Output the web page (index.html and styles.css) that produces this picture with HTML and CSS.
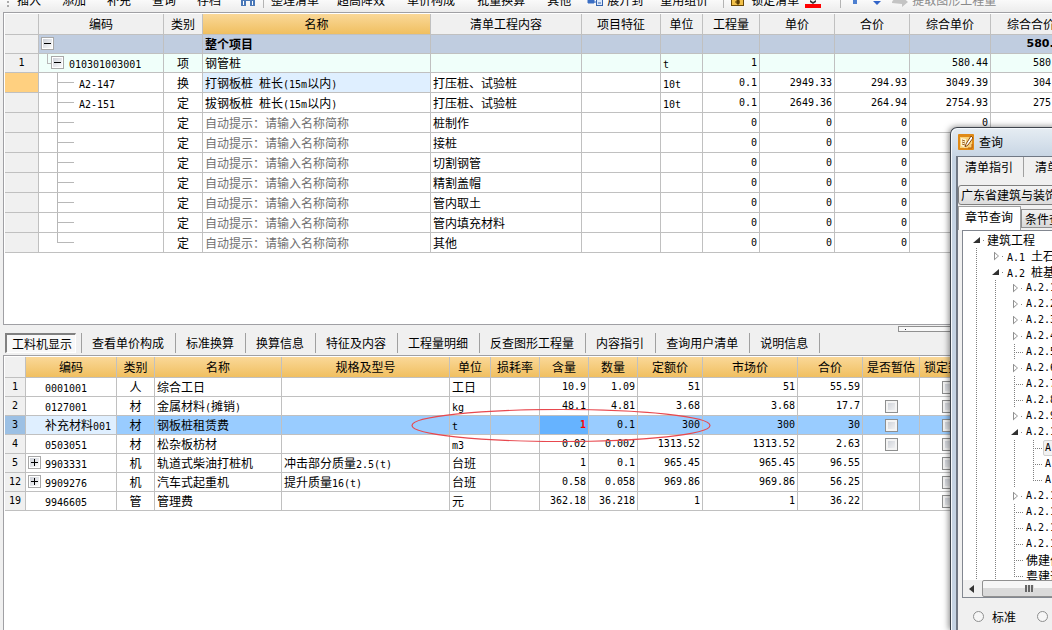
FILE: index.html
```
<!DOCTYPE html>
<html lang="zh-CN">
<head>
<meta charset="utf-8">
<title>工程计价</title>
<link rel="stylesheet" href="styles.css">
</head>
<body>
<div class="app">
  <div class="toolbar">
    <div class="tools">
      <span class="grip"></span>
      <div class="group"><button>插入</button><button>添加</button><button>补充</button><button>查询</button><button>存档</button></div>
      <button class="icon-btn find" aria-label="查找"><svg width="16" height="16" viewBox="0 0 16 16"><path d="M1 3h5v11H1zM10 3h5v11h-5zM6 6h4v3H6z" fill="#4a78b8"/><path d="M3 9h1v4H3zM12 9h1v4h-1z" fill="#fff"/></svg></button>
      <span class="sep"></span>
      <div class="group wide"><button class="tight">整理清单</button><button>超高降效</button><button>单价构成</button><button>批量换算</button><button>其他</button></div>
      <button class="with-icon expand-to"><svg width="16" height="16" viewBox="0 0 16 16"><path d="M1 8h6v3H1zM7 10h3" fill="#3b6fc4" stroke="#3b6fc4"/><rect x="9.500" y="7.500" width="6" height="6" fill="#dbe8fa" stroke="#3563ad"/><path d="M11 11h3" stroke="#3563ad"/></svg>展开到</button>
      <button class="reuse">重用组价</button>
      <span class="sep"></span>
      <button class="with-icon lock"><svg width="13" height="16" viewBox="0 0 13 16"><rect x=".5" y="5.500" width="12" height="8" fill="#f2c14a" stroke="#6b4a08"/><path d="M6 8h2v4H6zM4 10h5" fill="#5a3c05" stroke="#5a3c05"/></svg>锁定清单</button>
      <button class="icon-btn paint" aria-label="颜色"><svg width="16" height="16" viewBox="0 0 16 16"><path d="M5 8l3 2 3-2v2l-3 2-3-2z" fill="#333"/><path d="M0 12h16v4H0z" fill="#f00"/></svg></button>
      <span class="sep color-sep"></span>
      <button class="icon-btn up" aria-label="上移"><svg width="8" height="16" viewBox="0 0 8 16"><path d="M2 7h4v5H2z" fill="#4d7fd0"/></svg></button>
      <button class="icon-btn down" aria-label="下移"><svg width="8" height="16" viewBox="0 0 8 16"><path d="M0 9h8l-4 4z" fill="#3264c8"/></svg></button>
      <button class="with-icon extract" disabled><svg width="16" height="16" viewBox="0 0 16 16"><path d="M0 11c0-5 9-5 9-5V4l7 6-6 5v-3z" fill="#c4c4c4"/></svg>提取图形工程量</button>
    </div>
  </div>

  <section class="panel bill-panel">
    <table class="grid bill">
      <colgroup><col class="c34"><col class="c125"><col class="c39"><col class="c228"><col class="c151"><col class="c79"><col class="c42"><col class="c57"><col class="c75"><col class="c75"><col class="c81"><col class="c81"></colgroup>
      <thead><tr><th></th><th>编码</th><th>类别</th><th class="gold">名称</th><th>清单工程内容</th><th>项目特征</th><th>单位</th><th>工程量</th><th>单价</th><th>合价</th><th>综合单价</th><th>综合合价</th></tr></thead>
      <tbody>
        <tr class="total"><td class="no"></td><td class="root"><button class="toggle minus" aria-label="折叠"></button></td><td></td><td>整个项目</td><td></td><td></td><td></td><td></td><td></td><td></td><td></td><td class="r">580.44</td></tr>
        <tr class="item"><td class="no">1</td><td class="sub"><button class="toggle minus" aria-label="折叠"></button><i>010301003001</i></td><td class="c">项</td><td>钢管桩</td><td></td><td></td><td><i>t</i></td><td class="r">1</td><td></td><td></td><td class="r">580.44</td><td class="r">580.44</td></tr>
        <tr><td class="no current"></td><td class="branch"><i>A2-147</i></td><td class="c">换</td><td class="focus">打钢板桩<i> </i>桩长<i>(15m</i>以内<i>)</i></td><td>打压桩、试验桩</td><td></td><td><i>10t</i></td><td class="r">0.1</td><td class="r">2949.33</td><td class="r">294.93</td><td class="r">3049.39</td><td class="r">304.94</td></tr>
        <tr><td class="no"></td><td class="branch"><i>A2-151</i></td><td class="c">定</td><td>拔钢板桩<i> </i>桩长<i>(15m</i>以内<i>)</i></td><td>打压桩、试验桩</td><td></td><td><i>10t</i></td><td class="r">0.1</td><td class="r">2649.36</td><td class="r">264.94</td><td class="r">2754.93</td><td class="r">275.49</td></tr>
        <tr><td class="no"></td><td class="branch"></td><td class="c">定</td><td class="hint">自动提示：请输入名称简称</td><td>桩制作</td><td></td><td></td><td class="r">0</td><td class="r">0</td><td class="r">0</td><td class="r">0</td><td class="r">0</td></tr>
        <tr><td class="no"></td><td class="branch"></td><td class="c">定</td><td class="hint">自动提示：请输入名称简称</td><td>接桩</td><td></td><td></td><td class="r">0</td><td class="r">0</td><td class="r">0</td><td class="r"></td><td class="r"></td></tr>
        <tr><td class="no"></td><td class="branch"></td><td class="c">定</td><td class="hint">自动提示：请输入名称简称</td><td>切割钢管</td><td></td><td></td><td class="r">0</td><td class="r">0</td><td class="r">0</td><td class="r"></td><td class="r"></td></tr>
        <tr><td class="no"></td><td class="branch"></td><td class="c">定</td><td class="hint">自动提示：请输入名称简称</td><td>精割盖帽</td><td></td><td></td><td class="r">0</td><td class="r">0</td><td class="r">0</td><td class="r"></td><td class="r"></td></tr>
        <tr><td class="no"></td><td class="branch"></td><td class="c">定</td><td class="hint">自动提示：请输入名称简称</td><td>管内取土</td><td></td><td></td><td class="r">0</td><td class="r">0</td><td class="r">0</td><td class="r"></td><td class="r"></td></tr>
        <tr><td class="no"></td><td class="branch"></td><td class="c">定</td><td class="hint">自动提示：请输入名称简称</td><td>管内填充材料</td><td></td><td></td><td class="r">0</td><td class="r">0</td><td class="r">0</td><td class="r"></td><td class="r"></td></tr>
        <tr><td class="no"></td><td class="branch last"></td><td class="c">定</td><td class="hint">自动提示：请输入名称简称</td><td>其他</td><td></td><td></td><td class="r">0</td><td class="r">0</td><td class="r">0</td><td class="r"></td><td class="r"></td></tr>
      </tbody>
    </table>
  </section>

  <div class="detail-tabs">
    <button class="active">工料机显示</button><button>查看单价构成</button><button>标准换算</button><button>换算信息</button><button>特征及内容</button><button>工程量明细</button><button>反查图形工程量</button><button>内容指引</button><button>查询用户清单</button><button>说明信息</button>
    <span class="splitter"></span>
  </div>

  <section class="panel detail-panel">
    <table class="grid detail">
      <colgroup><col class="c21"><col class="c91"><col class="c38"><col class="c127"><col class="c168"><col class="c41"><col class="c49"><col class="c49"><col class="c49"><col class="c65"><col class="c95"><col class="c65"><col class="c57"><col class="c57"></colgroup>
      <thead><tr><th class="corner"></th><th>编码</th><th>类别</th><th>名称</th><th>规格及型号</th><th>单位</th><th>损耗率</th><th>含量</th><th>数量</th><th>定额价</th><th>市场价</th><th>合价</th><th>是否暂估</th><th>锁定数量</th></tr></thead>
      <tbody>
        <tr><td class="no">1</td><td class="code"><i>0001001</i></td><td class="c">人</td><td>综合工日</td><td></td><td>工日</td><td></td><td class="r">10.9</td><td class="r">1.09</td><td class="r">51</td><td class="r">51</td><td class="r">55.59</td><td></td><td class="c"><input type="checkbox" aria-label="锁定数量"></td></tr>
        <tr><td class="no">2</td><td class="code"><i>0127001</i></td><td class="c">材</td><td>金属材料<i>(</i>摊销<i>)</i></td><td></td><td><i>kg</i></td><td></td><td class="r">48.1</td><td class="r">4.81</td><td class="r">3.68</td><td class="r">3.68</td><td class="r">17.7</td><td class="c"><input type="checkbox" aria-label="是否暂估"></td><td class="c"><input type="checkbox" aria-label="锁定数量"></td></tr>
        <tr class="selected"><td class="no">3</td><td class="code focus">补充材料<i>001</i></td><td class="c">材</td><td>钢板桩租赁费</td><td></td><td><i>t</i></td><td></td><td class="r changed">1</td><td class="r">0.1</td><td class="r">300</td><td class="r">300</td><td class="r">30</td><td class="c"><input type="checkbox" aria-label="是否暂估"></td><td class="c"><input type="checkbox" aria-label="锁定数量"></td></tr>
        <tr><td class="no">4</td><td class="code"><i>0503051</i></td><td class="c">材</td><td>松杂板枋材</td><td></td><td><i>m3</i></td><td></td><td class="r">0.02</td><td class="r">0.002</td><td class="r">1313.52</td><td class="r">1313.52</td><td class="r">2.63</td><td class="c"><input type="checkbox" aria-label="是否暂估"></td><td class="c"><input type="checkbox" aria-label="锁定数量"></td></tr>
        <tr><td class="no">5</td><td class="parent"><button class="toggle plus" aria-label="展开"></button><i>9903331</i></td><td class="c">机</td><td>轨道式柴油打桩机</td><td>冲击部分质量<i>2.5(t)</i></td><td>台班</td><td></td><td class="r">1</td><td class="r">0.1</td><td class="r">965.45</td><td class="r">965.45</td><td class="r">96.55</td><td></td><td class="c"><input type="checkbox" aria-label="锁定数量"></td></tr>
        <tr><td class="no">12</td><td class="parent"><button class="toggle plus" aria-label="展开"></button><i>9909276</i></td><td class="c">机</td><td>汽车式起重机</td><td>提升质量<i>16(t)</i></td><td>台班</td><td></td><td class="r">0.58</td><td class="r">0.058</td><td class="r">969.86</td><td class="r">969.86</td><td class="r">56.25</td><td></td><td class="c"><input type="checkbox" aria-label="锁定数量"></td></tr>
        <tr><td class="no">19</td><td class="code"><i>9946605</i></td><td class="c">管</td><td>管理费</td><td></td><td>元</td><td></td><td class="r">362.18</td><td class="r">36.218</td><td class="r">1</td><td class="r">1</td><td class="r">36.22</td><td></td><td class="c"><input type="checkbox" aria-label="锁定数量"></td></tr>
      </tbody>
    </table>
    <svg class="marker" width="300" height="33" viewBox="0 0 300 33"><ellipse cx="150" cy="16.500" rx="149" ry="16" fill="none" stroke="#e8484e" stroke-width="1.200"/></svg>
  </section>

  <div class="dialog" role="dialog" aria-label="查询">
    <div class="title">
      <svg width="16" height="16" viewBox="0 0 16 16"><rect width="16" height="16" rx="1" fill="#e08a16"/><path d="M2 3h12v11H2z" fill="#f9d27a"/><path d="M3 4l5 1v9l-5-2z" fill="#fff3cf"/><path d="M4 6l3 1M4 8l3 1M4 10l3 1" stroke="#a0641c"/><path d="M13 2l-5 8-1 3 3-2 5-7z" fill="#fff" stroke="#8a4c10"/><path d="M10 14h4v-4" stroke="#b85c0a" fill="none"/></svg>
      <span>查询</span>
    </div>
    <div class="client">
      <div class="guide-tabs"><button>清单指引</button><button>清单</button></div>
      <button class="book">广东省建筑与装饰</button>
      <div class="query-tabs"><button class="on">章节查询</button><button>条件查询</button></div>
      <div class="tree-box">
        <ul class="tree">
          <li><b class="t open first"></b><span>建筑工程</span></li>
          <li><b class="g"></b><b class="t shut"></b><span>A.1 <em>土石方</em></span></li>
          <li><b class="g"></b><b class="t open"></b><span>A.2 <em>桩基</em></span></li>
          <li><b class="g"></b><b class="g"></b><b class="t shut"></b><span>A.2.1</span></li>
          <li><b class="g"></b><b class="g"></b><b class="t shut"></b><span>A.2.2</span></li>
          <li><b class="g"></b><b class="g"></b><b class="t shut"></b><span>A.2.3</span></li>
          <li><b class="g"></b><b class="g"></b><b class="t shut"></b><span>A.2.4</span></li>
          <li><b class="g"></b><b class="g"></b><b class="t leaf"></b><span>A.2.5</span></li>
          <li><b class="g"></b><b class="g"></b><b class="t shut"></b><span>A.2.6</span></li>
          <li><b class="g"></b><b class="g"></b><b class="t leaf"></b><span>A.2.7</span></li>
          <li><b class="g"></b><b class="g"></b><b class="t leaf"></b><span>A.2.8</span></li>
          <li><b class="g"></b><b class="g"></b><b class="t shut"></b><span>A.2.9</span></li>
          <li><b class="g"></b><b class="g"></b><b class="t open"></b><span>A.2.10</span></li>
          <li><b class="g"></b><b class="g"></b><b class="g"></b><b class="t leaf"></b><span class="picked">A.2</span></li>
          <li><b class="g"></b><b class="g"></b><b class="g"></b><b class="t leaf"></b><span>A.2</span></li>
          <li><b class="g"></b><b class="g"></b><b class="g"></b><b class="t leaf end"></b><span>A.2</span></li>
          <li><b class="g"></b><b class="g"></b><b class="t shut"></b><span>A.2.11</span></li>
          <li><b class="g"></b><b class="g"></b><b class="t leaf"></b><span>A.2.12</span></li>
          <li><b class="g"></b><b class="g"></b><b class="t leaf"></b><span>A.2.13</span></li>
          <li><b class="g"></b><b class="g"></b><b class="t leaf"></b><span>A.2.14</span></li>
          <li><b class="g"></b><b class="g"></b><b class="t leaf"></b><span><em>佛建价</em></span></li>
          <li><b class="g"></b><b class="g"></b><b class="t leaf end"></b><span><em>粤建造</em></span></li>
        </ul>
        <div class="scroll"><button class="arrow" aria-label="向左"><svg width="5" height="8" viewBox="0 0 5 8"><path d="M5 0v8L0 4z" fill="#333"/></svg></button><div class="thumb"><svg width="9" height="7" viewBox="0 0 9 7"><path d="M1 0v7M4 0v7M7 0v7" stroke="#666" stroke-width="2" stroke-dasharray="7"/><path d="M2.500 0v7M5.500 0v7M8.500 0v7" stroke="#ddd"/></svg></div></div>
      </div>
      <div class="kinds"><label><input type="radio" name="kind">标准</label><label><input type="radio" name="kind">补充</label></div>
    </div>
  </div>
</div>
</body>
</html>
```

FILE: styles.css
```
* { box-sizing: border-box; }
body {
  margin: 0;
  font: 12px/16px "Noto Sans CJK SC", sans-serif;
  color: #000;
  background: #f0f0f0;
}
button {
  font: inherit;
  color: inherit;
  padding: 0;
  border: 0;
  background: none;
  white-space: nowrap;
  flex: none;
}
svg { display: block; flex: none; }

.app {
  position: relative;
  display: flex;
  flex-direction: column;
  height: 100vh;
  overflow: hidden;
}

/* toolbar */
.toolbar {
  display: flex;
  align-items: flex-end;
  flex: none;
  height: 12px;
  padding-bottom: 4px;
  background: linear-gradient(#fafafa, #ececec);
}
.tools { display: flex; align-items: center; }
.group { display: flex; gap: 21px; }
.group.wide { gap: 22px; }
.group .tight { margin-right: -4px; }
.grip { width: 3px; height: 14px; margin: 0 7px; border-left: 2px dotted #aaa; }
.sep { width: 1px; height: 16px; margin: 0 7px; background: #b4b4b4; }
.find { margin-left: 19px; }
.with-icon { display: flex; align-items: center; gap: 4px; }
.expand-to { margin-left: 16px; }
.reuse { margin: 0 8px 0 17px; }
.lock { gap: 7px; }
.paint { margin-left: 6px; }
.color-sep { margin: 0 10px 0 19px; }
.down { margin-left: 14px; }
.extract { margin-left: 11px; color: #8a8a8a; }

/* grids */
.panel {
  position: relative;
  min-height: 0;
  overflow: hidden;
  margin-left: 3px;
  padding: 1px 0 0 1px;
  border: solid #a0a0a4;
  border-width: 1px 0 0 1px;
  background: #fff;
}
.bill-panel { flex: 313 1 0; border-bottom-width: 1px; }
.detail-panel { flex: 275 1 0; }
.grid { table-layout: fixed; border-collapse: separate; border-spacing: 0; }
.bill { width: 1067px; }
.detail { width: 972px; }
.grid th, .grid td {
  padding: 0 2px;
  border: solid #c0c0c0;
  border-width: 0 1px 1px 0;
  overflow: hidden;
  white-space: nowrap;
  text-align: left;
  font-weight: 400;
}
.grid th { height: 21px; padding: 0; text-align: center; background: #f0f0f0; }
.grid th.gold, .detail th { background: linear-gradient(#fad898, #f0bf60); }
.grid th.corner { background: #f0f0f0; }
.grid td { height: 20px; line-height: 16px; }
.grid .total td, .grid .item td, .detail td { height: 19px; }
.grid i, .grid td.r, .grid td.no {
  font: 10px/16px "DejaVu Sans Mono", monospace;
  white-space: pre;
}
.grid i { line-height: 10px; }
.grid td.r { text-align: right; }
.grid td.c { text-align: center; }
.grid td.no { background: #f0f0f0; text-align: center; }
.grid td.current { background: #ffd080; }
.grid .total td { background: #c0cde0; font-weight: 700; }
.grid .total td.r { font: 700 11px/16px "DejaVu Sans", sans-serif; }
.grid .item td { background-color: #f0fffa; }
.grid .total .no, .grid .item .no { background: #f0f0f0; }
.grid .hint { color: #707070; }
.grid td.focus { background: #dfefff; }
.detail .selected td { background: #99ccff; }
.detail .selected .no { background: #9cc0e4; }
.detail .selected .focus { background: #dfefff; }
.detail .selected .changed { background: #66b3ff; color: #f00; font-weight: 700; }
.detail td.code { padding-left: 19px; }

.c21 { width: 21px; } .c34 { width: 34px; } .c38 { width: 38px; } .c39 { width: 39px; }
.c41 { width: 41px; } .c42 { width: 42px; } .c49 { width: 49px; } .c57 { width: 57px; }
.c65 { width: 65px; } .c75 { width: 75px; } .c79 { width: 79px; } .c81 { width: 81px; }
.c91 { width: 91px; } .c95 { width: 95px; } .c125 { width: 125px; } .c127 { width: 127px; }
.c151 { width: 151px; } .c168 { width: 168px; } .c228 { width: 228px; }

.toggle {
  width: 13px;
  height: 13px;
  margin: -2px 0 2px;
  vertical-align: middle;
  border: 1px solid #a8a8a8;
  box-shadow: inset 0 0 0 1px #fff;
}
.minus { background: linear-gradient(#000, #000) center / 7px 1px no-repeat, linear-gradient(135deg, #c8ccd4, #fff); }
.plus { background: linear-gradient(#000, #000) center / 7px 1px no-repeat, linear-gradient(#000, #000) center / 1px 7px no-repeat, linear-gradient(135deg, #c8ccd4, #fff); }
.parent .toggle { margin-right: 4px; }
.sub .toggle { margin-right: 5px; }
.grid td.sub {
  padding-left: 12px;
  background-image: linear-gradient(#b8b8b8, #b8b8b8), linear-gradient(#b8b8b8, #b8b8b8);
  background-position: 8px 0, 8px 9px;
  background-size: 1px 9px, 4px 1px;
  background-repeat: no-repeat;
}
.grid td.branch {
  padding-left: 40px;
  background-image: linear-gradient(#b8b8b8, #b8b8b8), linear-gradient(#b8b8b8, #b8b8b8);
  background-position: 18px 0, 18px 9px;
  background-size: 1px 20px, 17px 1px;
  background-repeat: no-repeat;
}
.grid td.last { background-size: 1px 9px, 17px 1px; }

input[type="checkbox"] {
  appearance: none;
  display: block;
  width: 13px;
  height: 13px;
  margin: 0 auto;
  border: 1px solid #8e8f8f;
  background: linear-gradient(135deg, #c8ccd4, #f8f8f8);
  box-shadow: inset 0 0 0 2px #f4f4f4;
}
.marker { position: absolute; left: 407px; top: 53px; }

/* detail tabs */
.detail-tabs {
  position: relative;
  display: flex;
  align-items: center;
  flex: none;
  height: 30px;
  padding: 6px 0 0 5px;
}
.detail-tabs button { height: 20px; padding: 0 11px 0 10px; border-right: 1px solid #a0a0a0; }
.detail-tabs .active {
  padding: 0 3px 0 5px;
  margin-right: 5px;
  border: 1px solid #fff;
  border-top: 2px solid #808080;
  border-left: 2px solid #808080;
  background: #f8f8f8;
}
.detail-tabs .active + button { border-left: 1px solid #a0a0a0; }
.splitter {
  position: absolute;
  left: 898px;
  top: 1px;
  width: 60px;
  height: 6px;
  border: 1px solid #909090;
  background: #f8f8f8 linear-gradient(#223, #223) 6px 2px / 1px 1px no-repeat;
}

/* query dialog */
.dialog {
  position: absolute;
  left: 950px;
  top: 127px;
  bottom: 0;
  width: 300px;
  display: flex;
  flex-direction: column;
  padding-left: 5px;
  border: solid #3e444c;
  border-width: 1px 0 0 1px;
  border-radius: 7px 0 0 0;
  background: linear-gradient(#e6edf3, #c6d4e3 30px);
  box-shadow: -1px 0 6px rgba(0, 0, 0, .5), inset 1px 1px 0 #f4f8fc;
}
.title { display: flex; align-items: center; gap: 5px; height: 28px; padding-left: 2px; flex: none; }
.client {
  display: flex;
  flex-direction: column;
  flex: 1;
  min-height: 0;
  border: solid #707884;
  border-width: 1px 0 0 2px;
  background: #f0f0f0;
}
.guide-tabs { display: flex; height: 20px; flex: none; }
.guide-tabs button { padding: 0 10px 0 7px; border-right: 1px solid #a0a0a0; }
.guide-tabs button + button { padding-left: 11px; }
.book {
  height: 20px;
  margin-top: 8px;
  padding-left: 2px;
  text-align: left;
  border: 1px solid #808080;
  border-radius: 3px 0 0 3px;
  background: linear-gradient(#f4f4f4, #dcdcdc);
}
.query-tabs { display: flex; align-items: flex-end; height: 25px; flex: none; }
.query-tabs button {
  height: 19px;
  margin-bottom: 2px;
  padding: 0 8px 0 3px;
  border: 1px solid #909090;
  background: linear-gradient(#f2f2f2, #d8d8d8);
}
.query-tabs .on {
  height: 24px;
  margin-bottom: 0;
  padding: 0 7px 4px 6px;
  border-color: #a0a0a0;
  border-bottom: 0;
  background: #fff;
}
.tree-box {
  display: flex;
  flex-direction: column;
  flex: 1;
  min-height: 0;
  margin-left: 4px;
  border: 1px solid #828790;
  background: #fff;
}
.tree {
  flex: 1;
  min-height: 0;
  overflow: hidden;
  margin: 0;
  padding: 1px 0 0 4px;
  list-style: none;
  font: 10px/16px "DejaVu Sans Mono", monospace;
}
.tree li { display: flex; height: 16px; }
.tree em { font: 12px/16px "Noto Sans CJK SC", sans-serif; }
.tree .first + span { font: 12px/16px "Noto Sans CJK SC", sans-serif; padding: 0 1px; }
.tree span { padding: 0 2px; white-space: pre; }
.tree .picked { padding: 0 20px 0 1px; border: 1px solid #d0d0d0; border-radius: 2px; background: #f2f2f2; line-height: 14px; }
.g, .t { width: 19px; height: 16px; flex: none; background-repeat: no-repeat; }
.g, .leaf { background-image: repeating-linear-gradient(#808080 0 1px, transparent 1px 2px), repeating-linear-gradient(90deg, #808080 0 1px, transparent 1px 2px); }
.g { background-size: 1px 16px, 0 0; background-position: 9px 0; }
.leaf { background-size: 1px 16px, 9px 1px; background-position: 9px 0, 9px 8px; }
.leaf.end { background-size: 1px 8px, 9px 1px; }
.shut, .open { display: flex; align-items: center; padding-left: 6px; background: linear-gradient(#888, #888) 16px 8px / 1px 1px no-repeat; }
.shut::before {
  content: "";
  width: 5px;
  height: 9px;
  background: #909090;
  clip-path: polygon(0 0, 100% 50%, 0 100%, 0 0, 1px 2px, 1px 7px, 4px 50%, 1px 2px);
  margin-left: 2px;
}
.open::before {
  content: "";
  width: 7px;
  height: 6px;
  background: #303030;
  clip-path: polygon(100% 0, 100% 100%, 0 100%);
}
.scroll { display: flex; height: 17px; flex: none; background: #f0f0f0; }
.arrow { display: flex; align-items: center; width: 19px; padding-left: 6px; }
.thumb {
  display: flex;
  align-items: center;
  width: 97px;
  padding-left: 42px;
  border: 1px solid #909090;
  border-radius: 2px;
  background: linear-gradient(#f6f6f6 50%, #dadada 50%);
}
.kinds { display: flex; align-items: center; gap: 21px; height: 32px; padding: 5px 0 0 15px; flex: none; }
.kinds label { display: flex; align-items: center; gap: 8px; }
input[type="radio"] {
  appearance: none;
  width: 11px;
  height: 11px;
  margin: 0;
  border: 1px solid #8e8f8f;
  border-radius: 50%;
  background: #f6f6f6;
}
```
